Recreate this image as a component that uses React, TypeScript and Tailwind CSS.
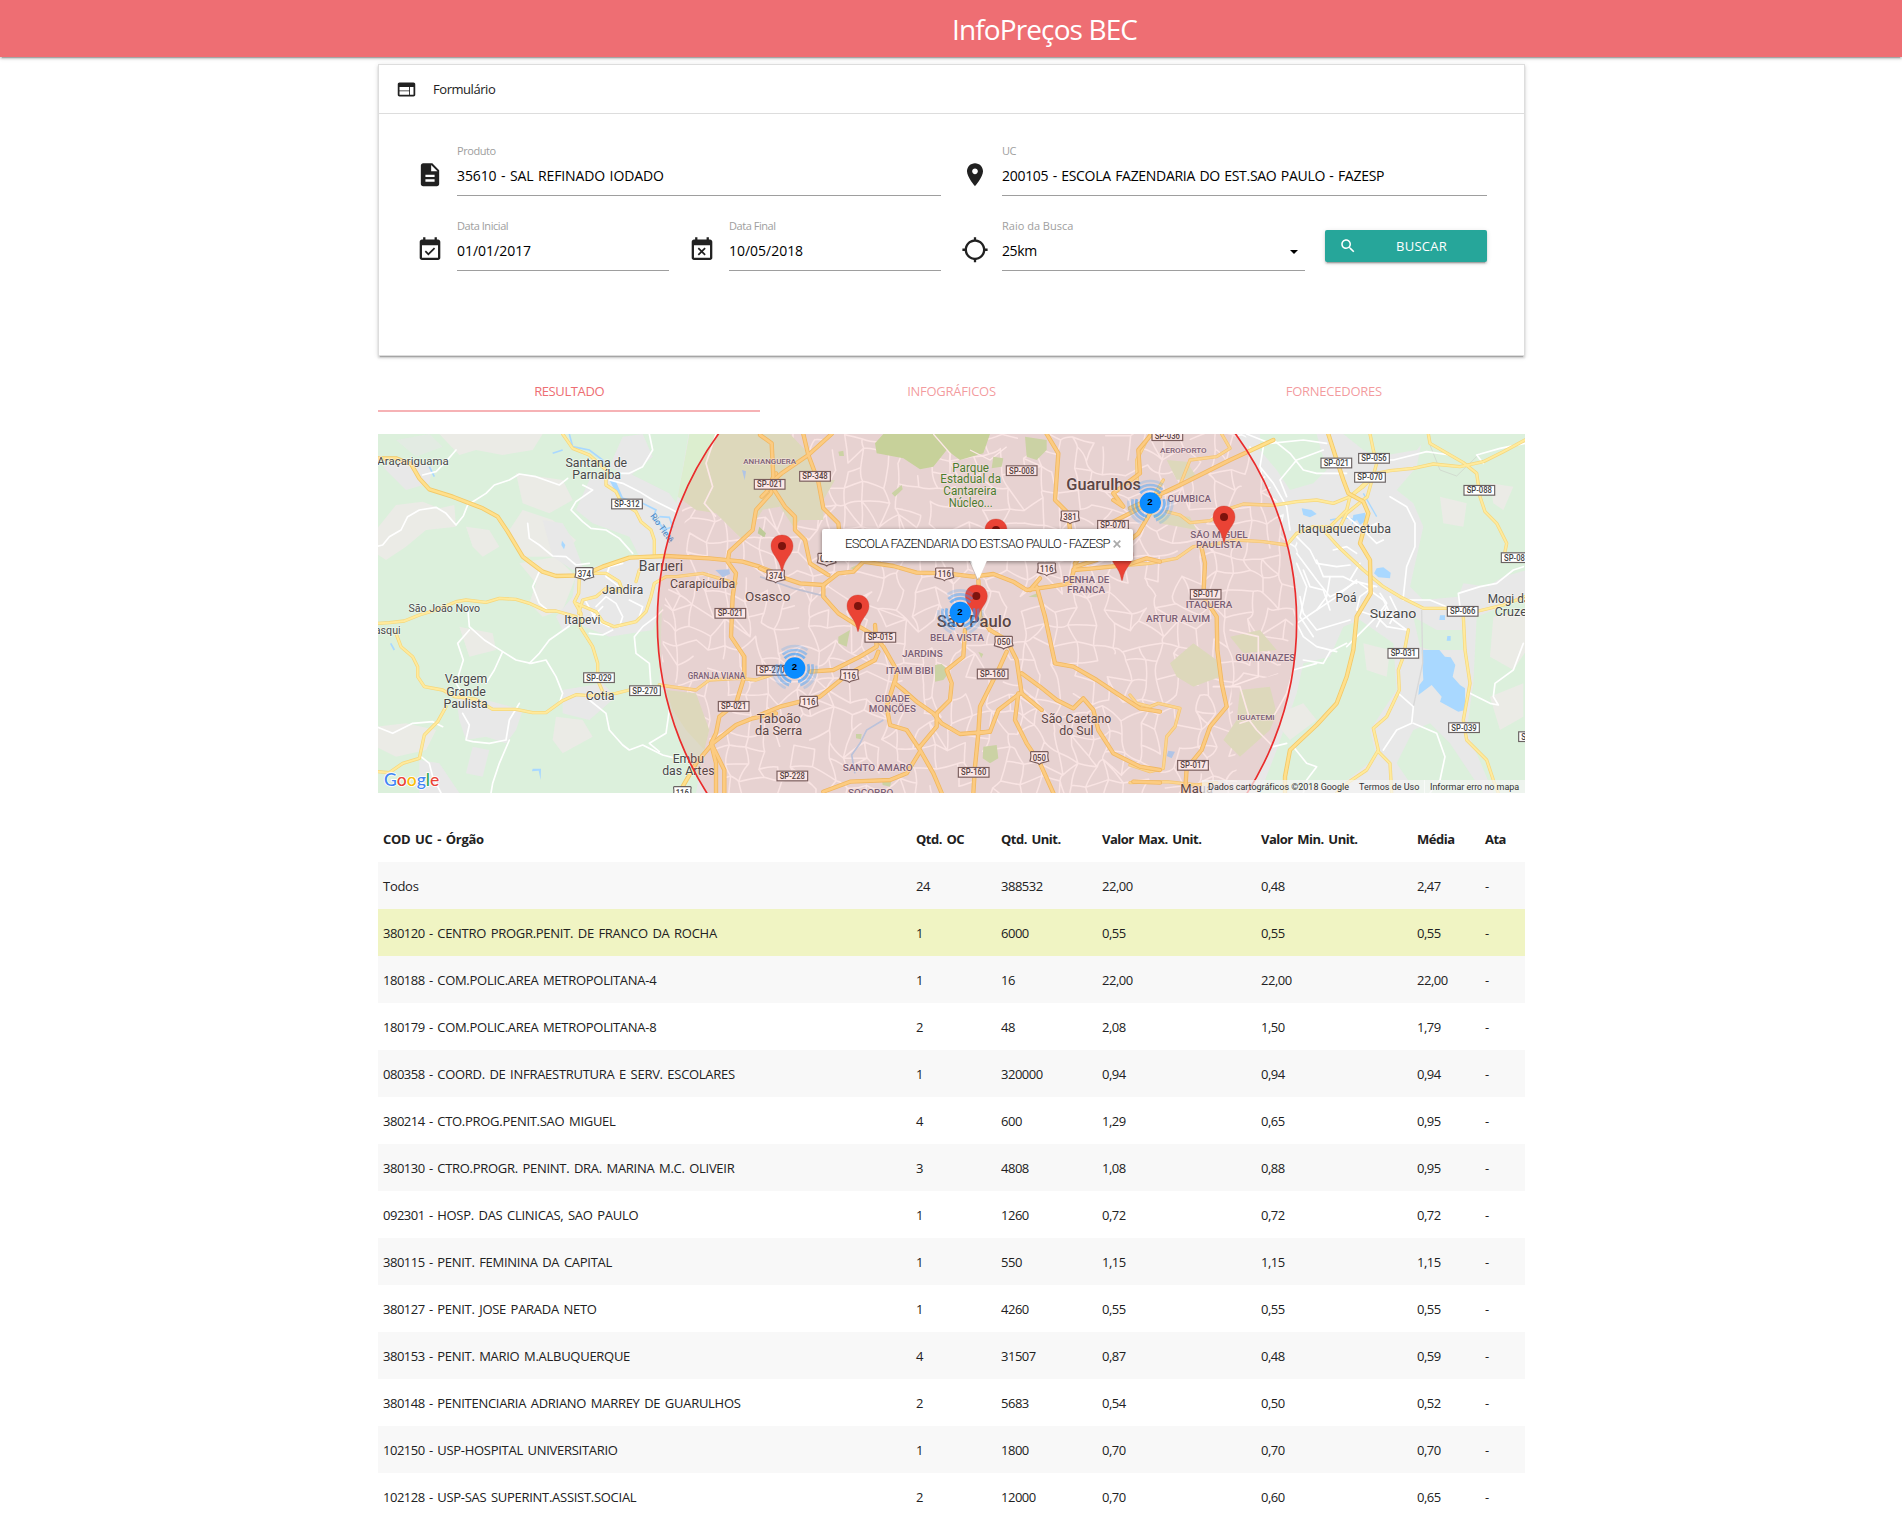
import React from "react";

const UI = "font-['Open_Sans','Noto_Sans',sans-serif]";

/* ---------- Material glyphs ---------- */

const ICONS = {
  web: "M20 4H4c-1.1 0-1.99.9-1.99 2L2 18c0 1.1.9 2 2 2h16c1.1 0 2-.9 2-2V6c0-1.1-.9-2-2-2zm-5 14H4v-4h11v4zm0-5H4V9h11v4zm5 5h-4V9h4v9z",
  description:
    "M14 2H6c-1.1 0-1.99.9-1.99 2L4 20c0 1.1.89 2 1.99 2H18c1.1 0 2-.9 2-2V8l-6-6zm2 16H8v-2h8v2zm0-4H8v-2h8v2zm-3-5V3.5L18.5 9H13z",
  place:
    "M12 2C8.13 2 5 5.13 5 9c0 5.25 7 13 7 13s7-7.75 7-13c0-3.87-3.13-7-7-7zm0 9.5c-1.38 0-2.5-1.12-2.5-2.5s1.12-2.5 2.5-2.5 2.5 1.12 2.5 2.5-1.12 2.5-2.5 2.5z",
  available:
    "M16.53 11.06L15.47 10l-4.88 4.88-2.12-2.12-1.06 1.06L10.59 17l5.94-5.94zM19 3h-1V1h-2v2H8V1H6v2H5c-1.11 0-1.99.9-1.99 2L3 19c0 1.1.89 2 2 2h14c1.1 0 2-.9 2-2V5c0-1.1-.9-2-2-2zm0 16H5V8h14v11z",
  busy: "M9.31 17l2.44-2.44L14.19 17l1.06-1.06-2.44-2.44 2.44-2.44L14.19 10l-2.44 2.44L9.31 10l-1.06 1.06 2.44 2.44-2.44 2.44L9.31 17zM19 3h-1V1h-2v2H8V1H6v2H5c-1.11 0-1.99.9-1.99 2L3 19c0 1.1.89 2 2 2h14c1.1 0 2-.9 2-2V5c0-1.1-.9-2-2-2zm0 16H5V8h14v11z",
  searching:
    "M20.94 11c-.46-4.17-3.77-7.48-7.94-7.94V1h-2v2.06C6.83 3.52 3.52 6.83 3.06 11H1v2h2.06c.46 4.17 3.77 7.48 7.94 7.94V23h2v-2.06c4.17-.46 7.48-3.77 7.94-7.94H23v-2h-2.06zM12 19c-3.87 0-7-3.13-7-7s3.13-7 7-7 7 3.13 7 7-3.13 7-7 7z",
  search:
    "M15.5 14h-.79l-.28-.27C15.41 12.59 16 11.11 16 9.5 16 5.91 13.09 3 9.5 3S3 5.91 3 9.5 5.91 16 9.5 16c1.61 0 3.09-.59 4.23-1.57l.27.28v.79l5 4.99L20.49 19l-4.99-5zm-6 0C7.01 14 5 11.99 5 9.5S7.01 5 9.5 5 14 7.01 14 9.5 11.99 14 9.5 14z",
};

function Icon({ name, className }: { name: keyof typeof ICONS; className: string }) {
  return (
    <svg viewBox="0 0 24 24" fill="currentColor" className={className}>
      <path d={ICONS[name]} />
    </svg>
  );
}

/* ---------- Form ---------- */

function Field({
  icon,
  label,
  value,
  width,
  select,
  labelClass = "tracking-[-0.45px]",
  valueClass = "tracking-[-0.02px]",
}: {
  icon: keyof typeof ICONS;
  label: string;
  value: string;
  width: string;
  select?: boolean;
  labelClass?: string;
  valueClass?: string;
}) {
  return (
    <div className={`flex ${width}`}>
      <Icon name={icon} className="mt-[17px] h-[27.5px] w-7 shrink-0 text-[#212121]" />
      <div className="ml-[13px] flex-1">
        <div className={`h-[14px] text-[11px] leading-[14px] text-[#9e9e9e] whitespace-nowrap ${labelClass}`}>{label}</div>
        <div className="flex h-[38px] justify-between border-b border-[#9e9e9e] text-[14px] leading-[35px] text-black">
          <span className={`whitespace-nowrap ${valueClass}`}>{value}</span>
          {select && (
            <svg viewBox="0 0 10 5" className="mr-[7px] mt-[17px] h-[4px] w-[8px]">
              <path d="M0 0h10L5 5z" />
            </svg>
          )}
        </div>
      </div>
    </div>
  );
}

function FormCard() {
  return (
    <section className="ml-[378px] mt-[7px] h-[292px] w-[1147px] border border-[#ddd] bg-white shadow-[0_2px_2px_0_rgba(0,0,0,0.14),0_1px_5px_0_rgba(0,0,0,0.12),0_3px_1px_-2px_rgba(0,0,0,0.2)]">
      <div className="flex h-[49px] items-center border-b border-[#ddd] pl-[17px]">
        <Icon name="web" className="h-[21px] w-[21px] text-[#212121]" />
        <span className="ml-[16px] pt-[2px] text-[13px] tracking-[-0.45px] text-[#212121]">Formulário</span>
      </div>
      <div className="flex flex-col gap-[23px] pl-[37px] pt-[30px]">
        <div className="flex gap-5">
          <Field icon="description" label="Produto" value="35610 - SAL REFINADO IODADO" width="w-[525px]" valueClass="tracking-[-0.11px] [word-spacing:1px]" />
          <Field icon="place" label="UC" value="200105 - ESCOLA FAZENDARIA DO EST.SAO PAULO - FAZESP" width="w-[526px]" valueClass="tracking-[-0.29px] [word-spacing:1px]" />
        </div>
        <div className="flex">
          <Field icon="available" label="Data Inicial" value="01/01/2017" width="w-[253px]" />
          <div className="w-[19px]" />
          <Field icon="busy" label="Data Final" value="10/05/2018" width="w-[253px]" />
          <div className="w-[20px]" />
          <Field select icon="searching" label="Raio da Busca" value="25km" width="w-[344px]" labelClass="tracking-normal" valueClass="tracking-[-0.4px]" />
          <button className="ml-5 mt-[11px] flex h-8 w-[162px] items-center rounded-[2px] bg-[#26a69a] pl-[14px] text-white shadow-[0_2px_2px_0_rgba(0,0,0,0.14),0_1px_5px_0_rgba(0,0,0,0.12),0_3px_1px_-2px_rgba(0,0,0,0.2)]">
            <Icon name="search" className="h-[18px] w-[18px]" />
            <span className="ml-[39px] text-[13px] leading-[32px] tracking-[0.25px]">BUSCAR</span>
          </button>
        </div>
      </div>
    </section>
  );
}

/* ---------- Map ---------- */

type Pt = string;

// Streets of the dense urban area: a jittered lattice with some edges left out.
function streetMesh() {
  let seed = 4211;
  const rnd = () => {
    seed = (seed * 16807) % 2147483647;
    return seed / 2147483647;
  };
  const step = 52;
  const cols = Math.ceil(1980 / step);
  const rows = Math.ceil(1120 / step);
  const pts: [number, number][][] = [];
  for (let r = 0; r <= rows; r++) {
    pts.push([]);
    for (let c = 0; c <= cols; c++) {
      pts[r].push([840 + c * step + (rnd() - 0.5) * 38, r * step + (c % 2) * 18 + (rnd() - 0.5) * 38]);
    }
  }
  let d = "";
  const edge = (a: [number, number], b: [number, number]) => {
    const mx = (a[0] + b[0]) / 2 + (rnd() - 0.5) * 16;
    const my = (a[1] + b[1]) / 2 + (rnd() - 0.5) * 16;
    d += `M${a[0].toFixed(0)} ${a[1].toFixed(0)}Q${mx.toFixed(0)} ${my.toFixed(0)} ${b[0].toFixed(0)} ${b[1].toFixed(0)}`;
  };
  for (let r = 0; r < rows; r++) {
    for (let c = 0; c < cols; c++) {
      if (rnd() < 0.72) edge(pts[r][c], pts[r][c + 1]);
      if (rnd() < 0.72) edge(pts[r][c], pts[r + 1][c]);
      if (rnd() < 0.1) edge(pts[r][c], pts[r + 1][c + 1]);
    }
  }
  return d;
}

const MESH = streetMesh();

const WEST = "translate(-6 -12)";
const MID = "translate(1146 -12)";
const EAST = "translate(2256 -12)";

const westMinor: Pt[] = [
  "0 350 20 345 40 320 75 300 95 260 130 240 180 232 210 250 240 285 262 258 275 225 330 190 355 165 400 150 430 132 480 140 550 165 575 145",
  "455 280 460 325 490 345 530 378 570 380 600 405 640 400",
  "620 165 650 180 600 215 585 240 620 275 645 295 690 300 730 325 770 370",
  "700 150 740 160 790 185 830 210 880 235 900 245",
  "820 12 830 60 800 110 760 130 720 130",
  "140 135 180 125 210 95 240 60",
  "490 425 470 470 490 520 520 545",
  "275 530 280 590 325 630 380 665 420 690 465 700 510 690 540 740 560 790 550 820",
  "280 600 245 640 262 690 240 760 260 790",
  "580 588 520 630 490 670 460 700",
  "380 665 355 720 330 760",
  "260 850 280 885 270 930 290 935 340 940 390 930 400 870 430 820",
  "400 930 370 1000 350 1060 345 1089",
  "0 890 50 910 110 880 170 875 200 890",
  "135 980 160 1000 170 1040 195 1089",
  "640 810 690 850 700 900 740 945 760 960 800 945 860 975 900 985",
  "880 840 870 910 820 940 850 965",
  "825 770 820 700 780 670 775 620 800 590 840 560 860 540",
  "640 610 680 615 710 600",
  "660 530 690 500 720 520 740 560 730 590",
  "740 400 700 410 690 440 730 470",
  "760 510 800 530 790 560",
  "630 515 660 570 700 590",
  "680 530 650 560",
];

const westMajor: Pt[] = [
  "6 580 40 578 85 573 130 555 180 540 240 515 270 510 330 517 370 505 420 508 460 520 510 543 540 543 600 560",
  "60 610 75 650 110 680 125 710 125 740 145 770 200 780 235 800 300 808 350 838 420 838 470 848 510 848 560 812 600 794 640 797 720 790 760 780",
  "6 1025 40 1028 80 1000 130 985 145 915 185 875 210 830",
  "560 12 590 55 640 75 690 120 690 165 720 185 735 215 780 245 795 275 825 300 835 330 835 378",
  "610 440 608 490 595 515 615 550 612 590 650 650 665 700 665 750 680 785",
  "640 430 690 430 730 455 740 485 690 475 660 500 620 510 608 550",
  "600 520 660 545 680 575 715 590 780 575 810 545 825 500 835 460 870 440 900 440 980 430 1030 445 1080 460",
  "780 455 790 420",
  "850 765 900 772 960 780 1000 750 1090 745 1140 750 1200 730",
];

const westHighway: Pt[] = [
  "6 85 60 85 105 102 130 145 160 178 230 200 320 235 365 260 395 305 440 380 500 425 540 438 620 436 680 410 760 383 870 378 1000 385 1100 395 1150 410 1200 430",
  "1200 130 1185 190 1140 240 1130 300 1060 365 1055 395 1080 430 1070 500 1065 620 1105 680 1105 740 1080 820 1030 860 1020 910 1005 940 1020 1000 1020 1089",
  "1006 940 1045 1020 1045 1089",
  "1200 850 1130 865 1080 885 1010 940 960 1000 920 1070",
];

const midHighway: Pt[] = [
  "0 415 60 440 120 460 190 465 235 430 280 425 310 395 400 408 470 428 560 430 640 440 700 432 760 455 800 480 870 470 930 460 945 410 1010 390",
  "940 420 1000 415 1100 405 1160 385 1200 395",
  "190 465 190 500 235 550 290 585 340 615 370 650 410 720 405 760 430 780 470 815 520 850 545 880 600 912 690 905",
  "0 15 35 40 40 140 20 185 5 200",
  "130 12 145 75 175 155 190 235 235 280 240 325",
  "215 12 145 75 65 130 30 160 75 230 105 260 105 300 135 330 150 400 205 435",
  "405 750 380 830 390 885 440 900 480 960 520 1030 545 1089",
  "480 965 440 1030 390 1050 270 1055 190 1085",
  "0 855 60 830 180 800 260 735 345 690 355 665",
  "150 725 220 720 300 680 350 650 345 585",
  "860 12 895 70 885 210 925 250 930 300",
  "830 470 855 560 885 700 940 710 1010 750 1070 790 1140 835 1200 845",
  "690 600 740 630 770 690 785 790 845 840",
  "785 730 840 770 890 810 940 835 970 805 1000 840 1015 900 1060 970 1140 1010 1200 1020",
  "740 665 715 720 680 790 660 830 655 910 645 1010 640 1089",
  "615 600 610 680 560 720 575 760 570 810 530 850 530 890 480 950",
  "780 790 715 840 690 905 650 910",
  "775 790 765 870 800 940 840 1000 880 1089",
  "655 450 660 560 690 600",
  "840 445 810 480",
  "1200 200 1120 245 1030 290 945 400",
  "1060 210 1090 230 1060 190 1140 130 1135 60 1175 12",
  "1120 1055 1200 1058",
];

const eastMajor: Pt[] = [
  "60 12 20 90 22 160",
  "275 12 300 55 260 80 180 90 150 165",
  "0 405 60 400 140 385 190 350 240 345 320 330 400 335 470 345 500 310 550 290 600 290",
  "300 235 340 222 430 226 500 215 560 210 610 220 660 200 710 155",
  "110 245 150 255 180 278 240 272 290 245",
  "600 290 650 240 660 200 700 170 740 130 780 122 850 115 910 102 990 110 1060 95 1120 65 1185 30",
  "720 12 730 60 740 100 712 200 650 250 630 290 590 305",
  "580 300 630 355 700 420 760 470 810 500 880 535 960 535",
  "895 12 900 40 1000 98 1040 130 1050 200 1065 245 1100 280 1130 340 1125 365",
  "0 795 20 820 60 830 85 820 150 835 135 890 110 920 100 1015 60 1025 0 1005",
  "835 600 820 680 805 720 808 780 770 860 730 895 745 960 710 1020 650 1060 620 1089",
  "745 965 780 1000 785 1089",
  "1000 560 1005 660 1020 760 1000 870 1010 930 1070 990 1090 1050 1105 1089",
  "1045 543 1120 525 1185 500",
  "0 1058 110 1055 200 1065 260 1058",
  "70 200 100 150",
];

const eastHighway: Pt[] = [
  "595 12 620 90 640 150 655 190 700 215 715 250 690 340 720 390 722 490 680 560 670 660 650 740 620 820 560 885 480 960 465 1040 465 1089",
  "430 30 300 90 150 165 65 205 0 235",
  "215 355 225 400 220 500 260 560 262 660 275 760 290 830 240 890 215 960 170 1015 165 1089",
  "60 250 25 310 0 330",
];

const eastMinor: Pt[] = [
  "430 30 480 70 520 120 560 130 650 130",
  "400 50 390 110 430 160 470 230 480 300",
  "350 12 420 40 520 30 590 40",
  "470 200 450 150 500 90 580 60",
  "500 320 540 360 560 400 620 410 660 405",
  "500 370 560 450 600 500 640 480 680 455 740 470",
  "690 460 760 510 790 570 830 600",
  "680 450 620 500 560 540 500 580 520 620 560 650 620 665",
  "730 470 690 500 680 540 740 560 770 590 830 600",
  "750 490 770 520 740 560",
  "780 500 800 540 780 580",
  "780 200 830 230 855 280 855 350 830 410 820 500",
  "650 640 600 665 580 700 520 690",
  "660 570 560 600 520 550 510 500",
  "740 560 680 620 650 650",
  "640 250 700 300 740 340 760 330",
  "690 400 660 450",
  "960 75 890 65 790 90 740 90",
  "1060 100 1040 75 1110 55 1185 40",
  "820 510 900 510 960 535",
  "990 530 985 490 1050 470 1100 460 1150 420 1180 410",
  "1180 640 1150 720 1095 760 1090 800 1105 825 1080 820 1020 790",
  "805 790 850 830 845 880 800 900 760 960",
  "850 880 920 910 945 980 930 1050 900 1089",
  "470 940 430 950 380 900 350 860",
  "560 700 490 720 470 790 430 860",
  "490 950 530 1000 560 1010 530 1050 520 1089",
  "300 600 385 620 385 740 300 770",
  "250 770 330 770 360 870 330 880",
  "520 420 540 470 580 480 600 540",
  "560 390 580 440 640 440 680 460",
  "770 530 740 590",
  "500 400 530 470 510 560 550 620",
  "610 360 650 350 680 370",
  "700 300 740 280 760 310",
  "600 440 590 500 560 540",
];

function lines(list: Pt[]) {
  return list.map((p, i) => <polyline key={i} points={p} />);
}

type Label = [number, number, string, number, number, string?, number?];
const TOWN = "#484848";
const AREA = "#6c6680";
const PARK = "#35872f";

// [centre x, baseline y, text, font size, width, colour, weight]
const westLabels: Label[] = [
  [111, 106, "Araçariguama", 33, 214],
  [661, 110, "Santana de", 37, 185],
  [662, 147, "Parnaíba", 37, 146],
  [855, 422, "Barueri", 42, 133],
  [740, 491, "Jandira", 38, 124],
  [619, 583, "Itapevi", 38, 109],
  [205, 545, "São João Novo", 31, 215],
  [30, 612, "rasqui", 31, 88],
  [270, 759, "Vargem", 38, 128],
  [270, 797, "Grande", 38, 119],
  [269, 834, "Paulista", 38, 133],
  [672, 810, "Cotia", 38, 86],
  [937, 999, "Embu", 38, 94],
  [937, 1035, "das Artes", 37, 157],
  [980, 474, "Carapicuíba", 37, 196],
];

const midLabels: Label[] = [
  [29, 102, "ANHANGUERA", 24, 158, AREA, 500],
  [-131, 746, "GRANJA VIANA", 25, 172, AREA, 500],
  [632, 125, "Parque", 36, 110, PARK],
  [632, 160, "Estadual da", 36, 182, PARK],
  [630, 195, "Cantareira", 36, 160, PARK],
  [632, 230, "Núcleo...", 36, 132, PARK],
  [1031, 179, "Guarulhos", 47, 224, TOWN, 500],
  [23, 513, "Osasco", 41, 136],
  [642, 590, "São Paulo", 48, 224, TOWN, 500],
  [591, 634, "BELA VISTA", 29, 162, AREA, 500],
  [487, 680, "JARDINS", 29, 122, AREA, 500],
  [449, 733, "ITAIM BIBI", 29, 144, AREA, 500],
  [397, 817, "CIDADE", 29, 104, AREA, 500],
  [397, 846, "MONÇÕES", 28, 141, AREA, 500],
  [978, 460, "PENHA DE", 29, 140, AREA, 500],
  [978, 489, "FRANCA", 29, 114, AREA, 500],
  [353, 1023, "SANTO AMARO", 29, 210, AREA, 500],
  [332, 1097, "SOCORRO", 28, 136, AREA, 500],
  [949, 878, "São Caetano", 38, 210],
  [949, 915, "do Sul", 38, 103],
  [56, 878, "Taboão", 38, 132],
  [56, 915, "da Serra", 37, 142],
];

const eastLabels: Label[] = [
  [160, 69, "AEROPORTO", 24, 140, AREA, 500],
  [178, 215, "CUMBICA", 28, 131, AREA, 500],
  [267, 323, "SÃO MIGUEL", 29, 172, AREA, 500],
  [267, 353, "PAULISTA", 29, 138, AREA, 500],
  [237, 534, "ITAQUERA", 28, 140, AREA, 500],
  [144, 575, "ARTUR ALVIM", 29, 192, AREA, 500],
  [406, 693, "GUAIANAZES", 28, 180, AREA, 500],
  [378, 869, "IGUATEMI", 24, 112, AREA, 500],
  [643, 308, "Itaquaquecetuba", 37, 280],
  [648, 515, "Poá", 38, 63],
  [789, 564, "Suzano", 39, 140],
  [1146, 518, "Mogi das", 38, 146],
  [1152, 558, "Cruzes", 38, 116],
  [200, 1089, "Mauá", 38, 98],
];

function Labels({ items }: { items: Label[] }) {
  return (
    <g textAnchor="middle" stroke="#ffffff" strokeOpacity="0.6" strokeWidth="4" strokeLinejoin="round" paintOrder="stroke">
      {items.map(([x, y, text, size, width, color, weight], i) => (
        <text key={i} x={x} y={y} fontSize={size} textLength={width} lengthAdjust="spacingAndGlyphs" fill={color ?? TOWN} fontWeight={weight ?? 400}>
          {text}
        </text>
      ))}
    </g>
  );
}

type Badge = [number, number, string];

const westSigns: Badge[] = [[753, 222, "SP-312"], [1181, 163, "SP-021"], [1063, 550, "SP-021"], [669, 743, "SP-029"], [807, 782, "SP-270"], [1073, 829, "SP-021"]];
const midSigns: Badge[] = [[165, 139, "SP-348"], [785, 122, "SP-008"], [1059, 286, "SP-070"], [361, 622, "SP-015"], [36, 721, "SP-270"], [698, 732, "SP-160"], [97, 1038, "SP-228"], [641, 1027, "SP-160"]];
const eastSigns: Badge[] = [[112, 17, "SP-036"], [619, 99, "SP-021"], [732, 85, "SP-056"], [720, 142, "SP-070"], [1048, 181, "SP-088"], [1160, 383, "SP-088"], [227, 493, "SP-017"], [998, 544, "SP-066"], [820, 670, "SP-031"], [1002, 893, "SP-039"], [1212, 920, "SP-102"], [189, 1006, "SP-017"]];
const westShields: Badge[] = [[625, 431, "374"], [919, 1088, "116"]];
const midShields: Badge[] = [[47, 438, "374"], [200, 388, "050"], [553, 432, "116"], [860, 417, "116"], [930, 261, "381"], [731, 637, "050"], [268, 737, "116"], [146, 817, "116"], [838, 983, "050"]];

function Signs({ items }: { items: Badge[] }) {
  return (
    <g textAnchor="middle" fontSize="25" fontWeight="500">
      {items.map(([x, y, text], i) => (
        <g key={i}>
          <rect x={x - 46} y={y - 14.5} width="92" height="29" fill="#fff" stroke="#6a6262" strokeWidth="3.5" />
          <text x={x} y={y + 9} textLength="76" lengthAdjust="spacingAndGlyphs" fill="#444">{text}</text>
        </g>
      ))}
    </g>
  );
}

function Shields({ items }: { items: Badge[] }) {
  return (
    <g textAnchor="middle" fontSize="25" fontWeight="500">
      {items.map(([x, y, text], i) => (
        <g key={i} transform={`translate(${x} ${y})`}>
          <path d="M-24-18H24Q27-18 26-12Q24-2 28 10Q18 13 10 15Q4 16 0 20Q-4 16-10 15Q-18 13-28 10Q-24-2-26-12Q-27-18-24-18Z" fill="#fff" stroke="#6a6262" strokeWidth="3.5" />
          <text y="9" textLength="40" lengthAdjust="spacingAndGlyphs" fill="#444">{text}</text>
        </g>
      ))}
    </g>
  );
}

function Pin({ x, top }: { x: number; top: number }) {
  return (
    <g transform={`translate(${x} ${top})`}>
      <path d="M0 0C-19 0-33 14-33 33C-33 60-8 68-2 106Q0 114 2 106C8 68 33 60 33 33C33 14 19 0 0 0Z" fill="#ea4335" stroke="#c5362a" strokeWidth="1" />
      <circle cy="33" r="12" fill="#7d130d" />
    </g>
  );
}

// One third of a ring, centred on the given angle in degrees.
function arc(radius: number, middle: number, spread: number) {
  const p = (deg: number) => {
    const a = (deg * Math.PI) / 180;
    return `${(radius * Math.cos(a)).toFixed(1)} ${(radius * Math.sin(a)).toFixed(1)}`;
  };
  return `M${p(middle - spread)}A${radius} ${radius} 0 0 1 ${p(middle + spread)}`;
}

function Cluster({ x, y }: { x: number; y: number }) {
  return (
    <g transform={`translate(${x} ${y})`}>
      <g fill="none" stroke="#2f9bff" strokeWidth="8">
        {[-90, 30, 150].map((a) => (
          <g key={a}>
            <path d={arc(42, a, 46)} opacity="0.6" />
            <path d={arc(54, a, 42)} opacity="0.42" />
            <path d={arc(66, a, 36)} opacity="0.2" />
          </g>
        ))}
      </g>
      <circle r="32" fill="#0a8cff" />
      <text x="-1" y="7" textAnchor="middle" fontSize="29" fontWeight="700" className="font-['Liberation_Sans',sans-serif]">
        2
      </text>
    </g>
  );
}

function Roads({ minor, major, highway, at }: { minor: Pt[]; major: Pt[]; highway: Pt[]; at: string }) {
  return (
    <g transform={at} fill="none" strokeLinejoin="round" strokeLinecap="round">
      <g stroke="#ffffff" strokeWidth="5">{lines(minor)}</g>
      <g stroke="#f6d77c" strokeWidth="10">{lines(major)}</g>
      <g stroke="#ffea9c" strokeWidth="6">{lines(major)}</g>
      <g stroke="#f3c968" strokeWidth="13">{lines(highway)}</g>
      <g stroke="#ffe08c" strokeWidth="8">{lines(highway)}</g>
    </g>
  );
}

const GREEN = "#dcf0dc";
const SOFT = "#ebebe6";
const URBAN = "#e8e8e8";
const WATER = "#a9d8ff";
const WOOD = "#dceecf";

function MapView() {
  return (
    <section className="relative ml-[378px] mt-[22px] h-[359px] w-[1147px] overflow-hidden bg-[#e8e8e8] font-['Roboto',sans-serif]">
      <svg viewBox="0 0 3441 1077" preserveAspectRatio="none" className="block h-full w-full font-['Roboto',sans-serif]">
        <rect width="3441" height="1077" fill={URBAN} />
        <clipPath id="city">
          <path d="M960 0H2600L2760 330L2750 560L2700 720L2560 760L2580 1077H1050L960 820L850 700L860 500L890 330Z" />
        </clipPath>
        <path d={MESH} clipPath="url(#city)" fill="none" stroke="#fcfcfc" strokeWidth="4.5" strokeLinecap="round" strokeLinejoin="round" />

        <g transform={WEST}>
          <path d="M0 0H940L905 200L880 330L860 470L850 780L900 800L990 920L960 1089H0Z" fill={GREEN} />
          <g fill={SOFT}>
            <path d="M190 12H500L470 60L380 75L300 60L250 75Z" />
            <path d="M60 225L140 215L190 235L235 225L240 290L150 300L90 350L30 390L0 370V300Z" />
            <path d="M270 290L340 300L370 350L320 380L290 350Z" />
            <path d="M430 400L540 380L600 440L560 540L500 560L460 520L480 460Z" />
            <path d="M540 860L620 870L650 920L560 970L530 930Z" />
            <path d="M0 890L90 880L180 900L150 960L60 980L0 950Z" />
            <path d="M420 130L560 150L590 210L520 250L440 220Z" />
            <path d="M250 590L350 610L360 660L280 680Z" />
            <path d="M440 240L530 270L600 330L560 380L440 380L400 300Z" />
          </g>
          <g fill={URBAN}>
            <path d="M640 150L760 130L880 190L930 260L880 470L830 600L700 620L600 580L560 600L540 560L590 500L600 430L690 400L790 380L760 320L650 280L600 240Z" />
            <path d="M740 20L800 12L830 80L760 140L700 110Z" />
            <path d="M500 270L560 280L590 330L620 410L590 420L530 380Z" />
            <path d="M240 800L330 810L440 840L420 900L390 940L330 920L270 930L250 870Z" />
            <path d="M20 110L100 90L170 110L160 160L90 180Z" />
            <path d="M560 780L680 760L720 800L640 870L560 850Z" />
            <path d="M130 990L190 1000L250 1089H130Z" />
            <path d="M290 950L340 960L320 1040L270 1030Z" />
            <path d="M60 30L160 12L200 50L120 80Z" opacity="0.6" />
          </g>
          <path d="M940 12H1200V180L1100 330L1020 250L960 240L905 200Z" fill={WOOD} />
          <path d="M1020 12L990 100L1010 170L985 220L1020 260" fill="none" stroke="#fff" strokeWidth="5" />
          <path d="M870 780L960 790L1000 900L985 960L930 900L890 840Z" fill={WOOD} />
          <path d="M1150 290L1170 310L1165 322L1145 310Z" fill="#b9e0a8" />
          <g fill={WATER}>
            <path d="M1018 420L1060 418L1062 432L1040 442Z" />
            <path d="M700 150L720 155L742 205L730 208Z" />
            <path d="M558 332L568 345L564 358L556 345Z" />
            <path d="M1098 120L1110 124L1106 150Z" />
            <path d="M470 1016L495 1016L494 1050L488 1022L468 1024Z" />
          </g>
          <g fill="none" stroke={WATER} strokeWidth="5">
            <path d="M580 12L590 50L640 60L680 90L700 150" />
            <path d="M740 205L800 220L840 240L830 265L860 290L890 330" />
            <path d="M850 260L880 262L890 290L862 300L848 275" />
            <path d="M560 60L530 70M160 110L175 140M44 640L55 660" />
          </g>
        </g>

        <g transform={MID}>
          <path d="M0 12H90L150 75L165 150L225 150L190 210L190 270L120 270L100 290L60 230L0 240Z" fill={WOOD} />
          <path d="M370 12H690L670 70L600 90L560 60L520 110L480 118L430 85L350 70L345 40Z" fill="#c3e6a9" />
          <path d="M570 130L570 70L520 12M630 60L690 90L740 50" fill="none" stroke="#fff" strokeWidth="4" />
          <g fill="#c8e8b4">
            <path d="M795 20L860 30L860 60L830 90L800 80Z" />
            <path d="M700 80L730 85L725 110L695 115Z" />
            <path d="M525 705L545 702L570 725L550 750L525 755Z" />
            <path d="M670 950L710 945L715 985L690 1000L668 985Z" />
            <path d="M288 912L305 912L303 928L288 925Z" />
            <path d="M655 665L670 672L664 684Z" />
            <path d="M805 500L835 488L830 502Z" />
            <path d="M395 190L425 165L428 178L405 200Z" />
            <path d="M365 1045L395 1050L390 1070L368 1065Z" />
            <path d="M270 415L290 405L288 420Z" />
            <path d="M235 620L270 600L260 650L235 640Z" />
            <path d="M235 65L250 62L252 78L238 78Z" />
          </g>
          <path d="M0 440L100 475L200 500" fill="none" stroke="#bcd3e6" strokeWidth="5" />
          <path d="M370 870L320 900L300 940L275 975L285 1030" fill="none" stroke="#b5d5f2" strokeWidth="5" />
        </g>

        <g transform={EAST}>
          <path d="M880 12H1190V420L1120 440L1070 470L1000 460L985 500L880 510L840 470L860 380L880 290L850 220L800 180L860 110Z" fill={GREEN} />
          <path d="M640 12H900L860 60L740 80L700 60Z" fill={GREEN} />
          <path d="M390 12H560L590 120L550 160L480 180L440 120L390 60Z" fill={GREEN} />
          <path d="M640 590L690 570L790 640L800 780L720 900L740 980L640 1060L440 1089H390L440 960L500 790L520 700L600 680Z" fill={GREEN} />
          <path d="M1040 560L1190 500V1089H1090L1010 900L1030 760Z" fill={GREEN} />
          <path d="M900 880L960 940L1060 1089H860L800 1000L850 900Z" fill={GREEN} />
          <path d="M850 560L920 600L1000 600V660L900 660L870 650Z" fill={GREEN} />
          <g fill={SOFT}>
            <path d="M1080 160L1150 170L1120 240L1090 220Z" />
            <path d="M930 200L1010 220L1000 290L940 280Z" />
            <path d="M1090 560L1190 540V660L1150 720L1080 680Z" />
            <path d="M420 860L520 820L560 870L480 930Z" />
            <path d="M700 640L780 660L770 740L710 720Z" />
            <path d="M1080 800L1180 760V860L1110 900Z" />
          </g>
          <g fill={WOOD}>
            <path d="M110 90L170 95L200 140L140 150Z" />
            <path d="M120 700L190 640L260 690L270 740L190 770L140 740Z" />
            <path d="M330 780L420 770L440 850L420 900L330 980L280 930L320 870Z" />
            <path d="M300 620L390 600L440 660L340 670Z" />
            <path d="M60 250L180 260L200 300L90 280Z" />
          </g>
          <g fill={WATER}>
            <path d="M875 660H928L945 680L962 682L976 705L968 740L990 765L1005 775V840L985 845L930 815L935 800L905 765L865 795L868 765L880 750Z" />
            <path d="M740 415L760 412L782 428L780 445L745 442L732 430Z" />
            <path d="M515 235L545 240L560 252L540 262L520 255Z" />
            <path d="M670 255L705 248L710 270L690 285L680 268L665 285Z" />
            <path d="M930 556L945 556L945 570L928 570Z" />
            <path d="M952 618L962 618L962 632L950 632Z" />
            <path d="M115 962L135 965L125 985L110 978Z" />
          </g>
          <path d="M700 190L740 260M600 270L640 262L680 270" fill="none" stroke={WATER} strokeWidth="4" />
          <path d="M875 540L878 700L850 830" fill="none" stroke="#d8d8d8" strokeWidth="4" />
          <path d="M900 45L930 120L980 138L1050 70" fill="none" stroke="#d2dcd0" strokeWidth="3" />
        </g>

        <Roads at={WEST} minor={westMinor} major={westMajor} highway={westHighway} />
        <Roads at={EAST} minor={eastMinor} major={eastMajor} highway={eastHighway} />
        <Roads at={MID} minor={[]} major={[]} highway={midHighway} />

        <g transform={WEST}>
          <Signs items={westSigns} />
          <Shields items={westShields} />
          <Labels items={westLabels} />
          <text transform="translate(822 258) rotate(55)" fontSize="26" textLength="100" fill="#4a86c0">Rio Tietê</text>
        </g>
        <g transform={EAST}>
          <Signs items={eastSigns} />
          <Labels items={eastLabels} />
        </g>
        <g transform={MID}>
          <Signs items={midSigns} />
          <Shields items={midShields} />
          <Labels items={midLabels} />
        </g>

        <circle cx="1797" cy="564" r="959" fill="#e53935" fillOpacity="0.12" stroke="#ea2b2b" strokeWidth="5" />

        <g transform={MID}>
          <Pin x={66} top={315} />
          <Pin x={708} top={267} />
          <Pin x={1086} top={342} />
          <Pin x={294} top={495} />
          <Pin x={649} top={465} />
          <Pin x={1392} top={228} />
          <Cluster x={601} y={547} />
          <Cluster x={104} y={714} />
          <Cluster x={1171} y={219} />
          <path d="M627 390H679L653 450Z" fill="#fff" stroke="#b5a5a5" strokeWidth="2" />
        </g>

        <g transform={WEST}>
          <text x="24" y="1068" fontSize="54" fontWeight="500" textLength="166" lengthAdjust="spacingAndGlyphs" stroke="#fff" strokeWidth="5" paintOrder="stroke" className="font-['Lato',sans-serif]">
            <tspan fill="#4285f4">G</tspan>
            <tspan fill="#ea4335">o</tspan>
            <tspan fill="#fbbc05">o</tspan>
            <tspan fill="#4285f4">g</tspan>
            <tspan fill="#34a853">l</tspan>
            <tspan fill="#ea4335">e</tspan>
          </text>
        </g>
      </svg>

      <div className="absolute left-[444px] top-[95px] flex h-8 w-[311px] items-center rounded-[2px] bg-white pl-[23px] shadow-[0_1px_4px_rgba(0,0,0,0.45)]">
        <span className="w-[266px] whitespace-nowrap pb-[2px] text-[13px] font-light tracking-[-0.73px] text-[#111]">
          ESCOLA FAZENDARIA DO EST.SAO PAULO - FAZESP
        </span>
        <svg viewBox="0 0 8 8" className="ml-[2px] mt-[-3px] h-2 w-2">
          <path d="M0.7 0.7L7.3 7.3M7.3 0.7L0.7 7.3" stroke="#aaa" strokeWidth="1.7" />
        </svg>
      </div>
      <div className="absolute left-[444px] top-[127px] h-0 w-0">
        <svg viewBox="0 0 60 63" className="ml-[147px] mt-[-2px] h-[21px] w-5">
          <path d="M4 0H56L30 60Z" fill="#fff" />
        </svg>
      </div>

      <div className="absolute bottom-0 right-0 flex h-[13px] items-center bg-[#f5f5f5]/70 text-[9px] leading-[13px] text-[#333]">
        <span className="w-[152px] whitespace-nowrap pl-[6px] pt-px tracking-[-0.02px]">Dados cartográficos ©2018 Google</span>
        <span className="w-[70px] whitespace-nowrap pl-[5px] pt-px">Termos de Uso</span>
        <span className="w-[101px] whitespace-nowrap border-l border-white/60 pl-[5px] pt-px tracking-[-0.04px]">Informar erro no mapa</span>
      </div>
    </section>
  );
}

/* ---------- Table ---------- */

const HEAD = ["COD UC - Órgão", "Qtd. OC", "Qtd. Unit.", "Valor Max. Unit.", "Valor Min. Unit.", "Média", "Ata"];

// code, agency, then the numeric columns
const ROWS = [
  ["", "Todos", "24", "388532", "22,00", "0,48", "2,47", "-"],
  ["380120", "CENTRO PROGR.PENIT. DE FRANCO DA ROCHA", "1", "6000", "0,55", "0,55", "0,55", "-"],
  ["180188", "COM.POLIC.AREA METROPOLITANA-4", "1", "16", "22,00", "22,00", "22,00", "-"],
  ["180179", "COM.POLIC.AREA METROPOLITANA-8", "2", "48", "2,08", "1,50", "1,79", "-"],
  ["080358", "COORD. DE INFRAESTRUTURA E SERV. ESCOLARES", "1", "320000", "0,94", "0,94", "0,94", "-"],
  ["380214", "CTO.PROG.PENIT.SAO MIGUEL", "4", "600", "1,29", "0,65", "0,95", "-"],
  ["380130", "CTRO.PROGR. PENINT. DRA. MARINA M.C. OLIVEIR", "3", "4808", "1,08", "0,88", "0,95", "-"],
  ["092301", "HOSP. DAS CLINICAS, SAO PAULO", "1", "1260", "0,72", "0,72", "0,72", "-"],
  ["380115", "PENIT. FEMININA DA CAPITAL", "1", "550", "1,15", "1,15", "1,15", "-"],
  ["380127", "PENIT. JOSE PARADA NETO", "1", "4260", "0,55", "0,55", "0,55", "-"],
  ["380153", "PENIT. MARIO M.ALBUQUERQUE", "4", "31507", "0,87", "0,48", "0,59", "-"],
  ["380148", "PENITENCIARIA ADRIANO MARREY DE GUARULHOS", "2", "5683", "0,54", "0,50", "0,52", "-"],
  ["102150", "USP-HOSPITAL UNIVERSITARIO", "1", "1800", "0,70", "0,70", "0,70", "-"],
  ["102128", "USP-SAS SUPERINT.ASSIST.SOCIAL", "2", "12000", "0,70", "0,60", "0,65", "-"],
];

const GRID = "grid grid-cols-[533px_85px_101px_159px_156px_68px_1fr] pl-[5px] h-[47px] leading-[49px] whitespace-nowrap";

function ResultTable() {
  return (
    <section className="ml-[378px] mt-[22px] w-[1147px] text-[13px] text-[#212121]">
      <div className={`${GRID} font-bold tracking-[-0.5px] [word-spacing:1.7px]`}>
        {HEAD.map((h, i) => (
          <span key={h} className={i === 0 ? "tracking-[-0.33px]" : ""}>
            {h}
          </span>
        ))}
      </div>
      {ROWS.map(([code, name, ...cells], i) => (
        <div key={name} className={`${GRID} tracking-[-0.48px] ${i === 1 ? "bg-[#f0f4c3]" : i % 2 === 0 ? "bg-[#f8f8f8]" : "bg-white"}`}>
          <span className="[word-spacing:1.5px]">
            {code && `${code} - `}
            <span className="tracking-[-0.28px]">{name}</span>
          </span>
          {cells.map((cell, c) => (
            <span key={c}>{cell}</span>
          ))}
        </div>
      ))}
    </section>
  );
}

export default function App() {
  return (
    <div className={`h-[1538px] w-[1902px] overflow-hidden bg-white ${UI}`}>
      <header className="h-[57px] bg-[#ee6e73] pl-[952px] text-[28px] leading-[59px] text-white shadow-[0_2px_2px_0_rgba(0,0,0,0.14),0_1px_5px_0_rgba(0,0,0,0.12),0_3px_1px_-2px_rgba(0,0,0,0.2)]">
        <span className="tracking-[-0.88px]">InfoPreços BEC</span>
      </header>
      <FormCard />
      <nav className="ml-[378px] mt-[14px] grid h-[42px] w-[1147px] grid-cols-3 text-center text-[13px] leading-[43px] tracking-[-0.25px] text-[#ee6e73]/70">
        <a className="h-[42px] border-b-2 border-[#f6b2b5] tracking-[-0.4px] text-[#ee6e73]">RESULTADO</a>
        <a>INFOGRÁFICOS</a>
        <a>FORNECEDORES</a>
      </nav>
      <MapView />
      <ResultTable />
    </div>
  );
}
